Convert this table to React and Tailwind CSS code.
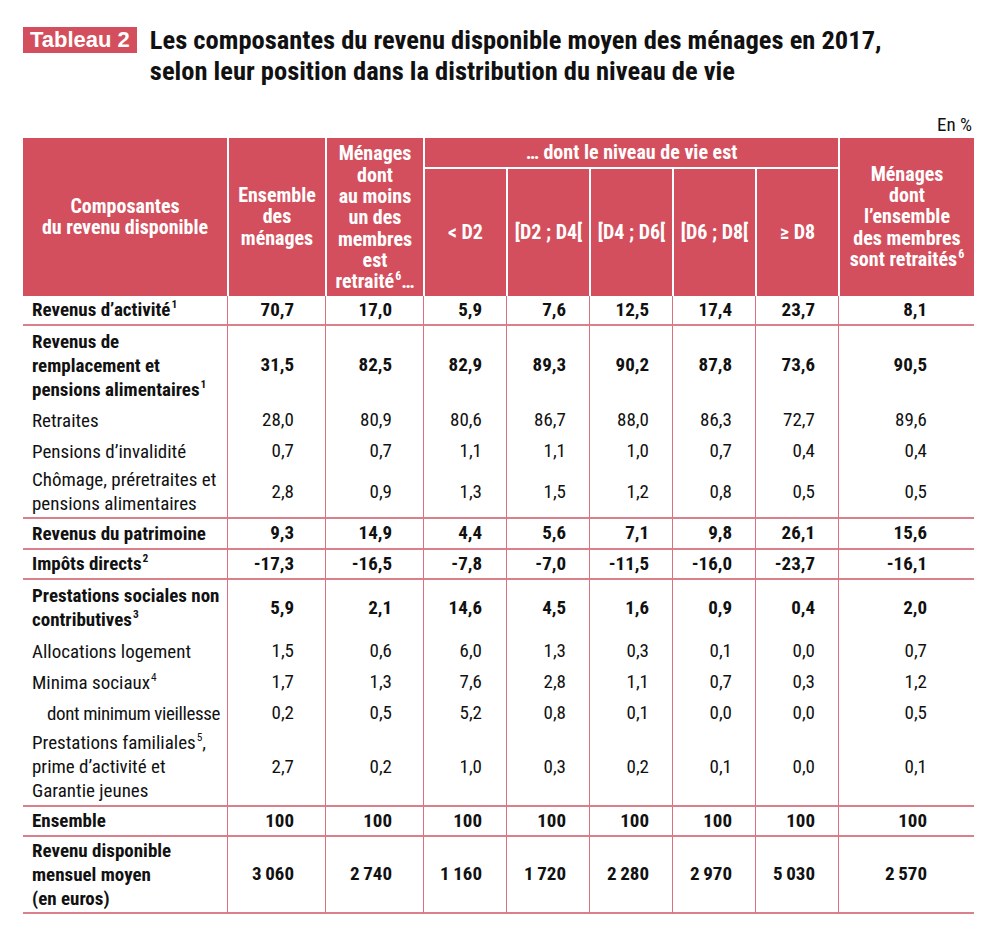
const font = "font-['Roboto_Condensed','Liberation_Sans_Narrow','DejaVu_Sans_Condensed',sans-serif]";
const cols = "grid grid-cols-[204px_98px_98px_83px_83px_83px_83px_83px_136px]";
const pads = ["pr-[31px]", "pr-[31px]", "pr-[24px]", "pr-[23px]", "pr-[23px]", "pr-[23px]", "pr-[23px]", "pr-[47px]"];
const sp = "\u2009";

function Sup({ children }) {
  return <sup className="text-[0.6em] top-[-0.7em] ml-[1px]">{children}</sup>;
}

const groups = [
  [
    { label: <>Revenus d’activité<Sup>1</Sup></>, bold: true, h: "h-[30px]", values: ["70,7", "17,0", "5,9", "7,6", "12,5", "17,4", "23,7", "8,1"] },
  ],
  [
    { label: <>Revenus de<br />remplacement et<br />pensions alimentaires<Sup>1</Sup></>, bold: true, h: "h-[79px]", values: ["31,5", "82,5", "82,9", "89,3", "90,2", "87,8", "73,6", "90,5"] },
    { label: "Retraites", h: "h-[31px]", values: ["28,0", "80,9", "80,6", "86,7", "88,0", "86,3", "72,7", "89,6"] },
    { label: "Pensions d’invalidité", h: "h-[31px]", values: ["0,7", "0,7", "1,1", "1,1", "1,0", "0,7", "0,4", "0,4"] },
    { label: <>Chômage, préretraites et<br />pensions alimentaires</>, h: "h-[52px]", values: ["2,8", "0,9", "1,3", "1,5", "1,2", "0,8", "0,5", "0,5"] },
  ],
  [
    { label: "Revenus du patrimoine", bold: true, h: "h-[31px]", values: ["9,3", "14,9", "4,4", "5,6", "7,1", "9,8", "26,1", "15,6"] },
  ],
  [
    { label: <>Impôts directs<Sup>2</Sup></>, bold: true, h: "h-[30px]", values: ["-17,3", "-16,5", "-7,8", "-7,0", "-11,5", "-16,0", "-23,7", "-16,1"] },
  ],
  [
    { label: <>Prestations sociales non<br />contributives<Sup>3</Sup></>, bold: true, h: "h-[56px]", values: ["5,9", "2,1", "14,6", "4,5", "1,6", "0,9", "0,4", "2,0"] },
    { label: "Allocations logement", h: "h-[31px]", values: ["1,5", "0,6", "6,0", "1,3", "0,3", "0,1", "0,0", "0,7"] },
    { label: <>Minima sociaux<Sup>4</Sup></>, h: "h-[31px]", values: ["1,7", "1,3", "7,6", "2,8", "1,1", "0,7", "0,3", "1,2"] },
    { label: "dont minimum vieillesse", indent: true, h: "h-[31px]", values: ["0,2", "0,5", "5,2", "0,8", "0,1", "0,0", "0,0", "0,5"] },
    { label: <>Prestations familiales<Sup>5</Sup>,<br />prime d’activité et<br />Garantie jeunes</>, h: "h-[78px]", values: ["2,7", "0,2", "1,0", "0,3", "0,2", "0,1", "0,0", "0,1"] },
  ],
  [
    { label: "Ensemble", bold: true, h: "h-[30px]", values: ["100", "100", "100", "100", "100", "100", "100", "100"] },
  ],
  [
    { label: <>Revenu disponible<br />mensuel moyen<br />(en euros)</>, bold: true, h: "h-[77px]", values: [`3${sp}060`, `2${sp}740`, `1${sp}160`, `1${sp}720`, `2${sp}280`, `2${sp}970`, `5${sp}030`, `2${sp}570`] },
  ],
];

function HeaderTable() {
  const cell = "flex items-center justify-center text-center bg-[#d44f5d] text-white font-bold text-[20px] leading-[21.3px] whitespace-nowrap";
  return (
    <div className={`${cols} grid-rows-[29px_129px]`}>
      <div className={`${cell} row-span-2`}>
        <span>
          Composantes
          <br />
          du revenu disponible
        </span>
      </div>
      <div className={`${cell} row-span-2 border-l-2 border-white`}>
        <span>
          Ensemble
          <br />
          des
          <br />
          ménages
        </span>
      </div>
      <div className={`${cell} row-span-2 border-l-2 border-white pt-[2px]`}>
        <span>
          Ménages
          <br />
          dont
          <br />
          au moins
          <br />
          un des
          <br />
          membres
          <br />
          est
          <br />
          retraité<Sup>6</Sup>…
        </span>
      </div>
      <div className={`${cell} col-span-5 border-l-2 border-white`}>… dont le niveau de vie est</div>
      <div className={`${cell} row-span-2 border-l-2 border-white`}>
        <span>
          Ménages
          <br />
          dont
          <br />
          l’ensemble
          <br />
          des membres
          <br />
          sont retraités<Sup>6</Sup>
        </span>
      </div>
      {["< D2", "[D2 ; D4[", "[D4 ; D6[", "[D6 ; D8[", "≥ D8"].map((d) => (
        <div key={d} className={`${cell} border-l-2 border-t-2 border-white`}>
          {d}
        </div>
      ))}
    </div>
  );
}

function BodyRow({ row, last }) {
  const line = last ? "border-b-2 border-b-[#d9808b]" : "";
  const weight = row.bold ? "font-bold" : "font-normal";
  return (
    <>
      <div
        className={`${row.h} ${line} ${weight} flex items-center whitespace-nowrap leading-[24px] ${
          row.indent ? "pl-[24px] tracking-[-0.4px]" : "pl-[9px]"
        }`}
      >
        <span>{row.label}</span>
      </div>
      {row.values.map((v, i) => (
        <div
          key={i}
          className={`${row.h} ${line} ${weight} ${pads[i]} flex items-center justify-end border-l-[1.5px] border-l-[#d9727e] tabular-nums whitespace-nowrap`}
        >
          {v}
        </div>
      ))}
    </>
  );
}

export default function App() {
  return (
    <div className={`${font} min-h-[932px] w-[996px] bg-white text-[#111] px-[23px] pt-[27px]`}>
      <div className="flex items-start gap-[13px]">
        <span className="font-['Liberation_Sans',sans-serif] font-bold text-[22px] leading-[26px] h-[26px] px-[7px] bg-[#d44f5d] text-white whitespace-nowrap">
          Tableau 2
        </span>
        <h1 className="text-[26.5px] leading-[31px] font-bold -mt-[3px]">
          Les composantes du revenu disponible moyen des ménages en 2017,
          <br />
          selon leur position dans la distribution du niveau de vie
        </h1>
      </div>

      <div className="mt-[29px] w-[951px]">
        <div className="flex justify-end text-[19px] leading-[20px] pr-[2px] pb-[3px]">En %</div>
        <HeaderTable />
        <div className={`${cols} text-[19px]`}>
          {groups.map((g, gi) =>
            g.map((row, ri) => <BodyRow key={`${gi}-${ri}`} row={row} last={ri === g.length - 1} />)
          )}
        </div>
      </div>
    </div>
  );
}
